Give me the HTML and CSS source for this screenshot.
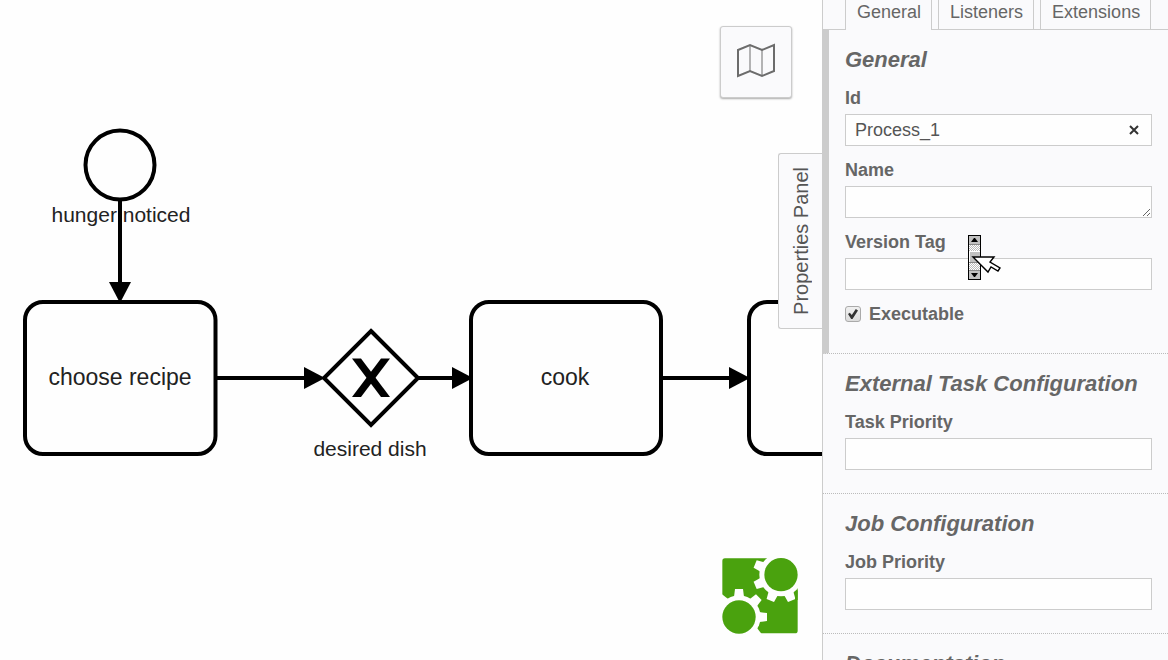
FILE: index.html
```html
<!DOCTYPE html>
<html lang="en">
<head>
<meta charset="utf-8">
<title>Process Modeler</title>
<link rel="stylesheet" href="styles.css">
</head>
<body>
<div class="modeler">
  <main class="canvas">
    <svg class="diagram" width="960" height="600" viewBox="0 0 960 600" role="img" aria-label="Process diagram">
      <g class="shape">
        <circle cx="120" cy="165" r="34.5"/>
        <rect x="25" y="302" width="190.5" height="152" rx="18"/>
        <path d="M371 331 418 378 371 425 324 378Z"/>
        <rect x="471" y="302" width="190" height="152" rx="18"/>
        <rect x="749" y="302" width="190" height="152" rx="18"/>
      </g>
      <g class="flow">
        <path d="M120 199V290"/>
        <path d="M216 378H310"/>
        <path d="M418 378H458"/>
        <path d="M661 378H735"/>
      </g>
      <g class="solid">
        <path d="M109 282H131L120 303Z"/>
        <path d="M304 367V389L325 378Z"/>
        <path d="M452 367V389L473 378Z"/>
        <path d="M729 367V389L750 378Z"/>
        <path d="M352 358.500H361L390 397H381Z"/>
        <path d="M381 358.500H390L361 397H352Z"/>
      </g>
      <g class="caption">
        <text x="121" y="222">hunger noticed</text>
        <text x="370" y="456">desired dish</text>
      </g>
      <g class="task-name">
        <text x="120" y="385">choose recipe</text>
        <text x="565" y="385">cook</text>
      </g>
    </svg>
    <button class="map-button" type="button" aria-label="Toggle minimap">
      <svg width="40" height="36" viewBox="0 0 40 36">
        <path class="map-outline" d="M2 7 14 2 26 7 38 2V28L26 33 14 28 2 33Z"/>
        <path class="map-fold" d="M14 2V28M26 7V33"/>
      </svg>
    </button>
    <a class="logo" href="#" aria-label="Powered by bpmn.io">
      <svg width="76" height="76" viewBox="66 54 228 228">
        <defs>
          <path id="tooth" d="M-15 -60 -12 -84H12L15 -60Z"/>
          <g id="gear">
            <circle r="65"/>
            <use href="#tooth"/>
            <use href="#tooth" transform="rotate(45)"/>
            <use href="#tooth" transform="rotate(90)"/>
            <use href="#tooth" transform="rotate(135)"/>
            <use href="#tooth" transform="rotate(180)"/>
            <use href="#tooth" transform="rotate(225)"/>
            <use href="#tooth" transform="rotate(270)"/>
            <use href="#tooth" transform="rotate(315)"/>
          </g>
        </defs>
        <path class="logo-green" d="M75 55H243V104H293V272Q293 280 285 280H117V231H67V63Q67 55 75 55Z"/>
        <use class="logo-gap" href="#gear" transform="translate(243 104) rotate(22.5)"/>
        <use class="logo-gap" href="#gear" transform="translate(117 231)"/>
        <path class="logo-green" d="M285 158 293 150V180H285Z"/>
        <circle class="logo-green" cx="243" cy="104" r="50"/>
        <circle class="logo-green" cx="117" cy="231" r="50"/>
      </svg>
    </a>
    <button class="panel-toggle" type="button"><span>Properties Panel</span></button>
  </main>

  <aside class="panel">
    <nav class="tabs">
      <a class="tab tab-active" href="#general">General</a>
      <a class="tab" href="#listeners">Listeners</a>
      <a class="tab" href="#extensions">Extensions</a>
    </nav>
    <form class="groups">
      <section class="group group-current" id="general">
        <h2>General</h2>
        <div class="field">
          <label for="id">Id</label>
          <div class="clearable">
            <input id="id" type="text" value="Process_1">
            <button class="clear" type="button" aria-label="Clear id">
              <svg width="10" height="10" viewBox="0 0 10 10"><path d="M1 1 9 9M9 1 1 9"/></svg>
            </button>
          </div>
        </div>
        <div class="field">
          <label for="name">Name</label>
          <textarea id="name" rows="1"></textarea>
        </div>
        <div class="field">
          <label for="version">Version Tag</label>
          <input id="version" type="text">
        </div>
        <div class="check">
          <input id="executable" type="checkbox" checked>
          <label for="executable">Executable</label>
        </div>
      </section>
      <section class="group">
        <h2>External Task Configuration</h2>
        <div class="field">
          <label for="task-priority">Task Priority</label>
          <input id="task-priority" type="text">
        </div>
      </section>
      <section class="group">
        <h2>Job Configuration</h2>
        <div class="field">
          <label for="job-priority">Job Priority</label>
          <input id="job-priority" type="text">
        </div>
      </section>
      <section class="group">
        <h2>Documentation</h2>
      </section>
    </form>
    <svg class="pointer" width="34" height="46" viewBox="0 0 34 46" aria-hidden="true">
      <defs>
        <pattern id="dither" width="2" height="2" patternUnits="userSpaceOnUse">
          <path fill="#fff" d="M0 0h2v2H0z"/>
          <path fill="#bbb" d="M0 0h1v1H0zM1 1h1v1H1z"/>
        </pattern>
      </defs>
      <rect x="0" y="0" width="13" height="45" fill="#000"/>
      <rect x="1" y="1" width="11" height="43" fill="url(#dither)"/>
      <path fill="#c0c0c0" d="M1 1h11v9H1zM1 35h11v9H1zM1 16h11v12H1z"/>
      <path fill="#fff" d="M1 16h11v1H1zM1 16h1v11H1z"/>
      <path fill="#888" d="M1 9h11v1H1zM1 27h11v1H1zM1 35h11v1H1z"/>
      <path fill="#000" d="M3 7H10L7 3H6ZM3 38H10L7 42H6Z"/>
      <path fill="#fff" stroke="#000" stroke-width="1.4" d="M5 22H26L22 27 32 33 30 36 23 32 20 37Z"/>
    </svg>
  </aside>
</div>
</body>
</html>
```
FILE: styles.css
```css
* {
  box-sizing: border-box;
}

body {
  margin: 0;
  font-family: "Liberation Sans", Arial, sans-serif;
  font-size: 18px;
  line-height: 20px;
  color: #666;
  background: #fefefe;
}

.modeler {
  display: flex;
  height: 100vh;
  overflow: hidden;
}

.canvas {
  position: relative;
  flex: 1;
  min-width: 0;
  overflow: hidden;
  background: #fefefe;
}

.diagram {
  display: block;
}

.shape {
  fill: #fefefe;
  stroke: #000;
  stroke-width: 4;
}

.flow {
  fill: none;
  stroke: #000;
  stroke-width: 4;
}

.solid {
  fill: #000;
}

.caption,
.task-name {
  fill: #222;
  font-size: 21px;
  text-anchor: middle;
}

.task-name {
  font-size: 23px;
}

.map-button {
  position: absolute;
  top: 26px;
  right: 30px;
  display: flex;
  align-items: center;
  justify-content: center;
  width: 72px;
  height: 72px;
  padding: 0 0 2px;
  border: 1px solid #ccc;
  border-radius: 3px;
  background: #fafafc;
  box-shadow: 0 1px 2px #aaa;
}

.map-outline,
.map-fold {
  fill: none;
  stroke: #6c6c6c;
  stroke-width: 2;
}

.map-fold {
  stroke-width: 1;
}

.logo {
  position: absolute;
  right: 24px;
  bottom: 26px;
  display: flex;
}

.logo-green {
  fill: #4aa20e;
}

.logo-gap {
  fill: #fefefe;
}

.panel-toggle {
  position: absolute;
  top: 153px;
  right: 0;
  display: flex;
  align-items: center;
  justify-content: center;
  width: 44px;
  height: 176px;
  padding: 0;
  border: 1px solid #ccc;
  border-right: 0;
  border-radius: 3px 0 0 3px;
  background: #fafafc;
  color: #555;
  font: 20px/24px "Liberation Sans", Arial, sans-serif;
}

.panel-toggle span {
  writing-mode: vertical-rl;
  transform: rotate(180deg);
}

.panel {
  position: relative;
  flex: none;
  width: 346px;
  border-left: 1px solid #ccc;
  background: #fafafc;
}

.tabs {
  display: flex;
  gap: 6px;
  padding-left: 22px;
  border-bottom: 1px solid #ccc;
}

.tab {
  padding: 2px 10px 7px 11px;
  border: 1px solid #ccc;
  border-width: 0 1px;
  color: #666;
  text-decoration: none;
}

.tab-active {
  margin-bottom: -1px;
  padding-bottom: 8px;
  background: #fafafc;
}

.group {
  padding: 17px 16px 23px 22px;
  border-bottom: 1px dotted #bbb;
}

.group-current {
  padding-left: 16px;
  padding-bottom: 29px;
  border-left: 6px solid #ccc;
}

h2 {
  margin: 0 0 15px;
  font-size: 22px;
  line-height: 26px;
  font-style: italic;
}

.field {
  display: flex;
  flex-direction: column;
  gap: 6px;
}

.field + .field {
  margin-top: 14px;
}

label {
  font-weight: bold;
}

input[type="text"],
textarea {
  display: block;
  width: 100%;
  height: 32px;
  margin: 0;
  padding: 5px 9px;
  border: 1px solid #ccc;
  border-radius: 0;
  background: #fefefe;
  color: #555;
  font: inherit;
}

textarea {
  resize: vertical;
  overflow: hidden;
}

.clearable {
  position: relative;
}

.clear {
  position: absolute;
  top: 6px;
  right: 8px;
  display: flex;
  align-items: center;
  justify-content: center;
  width: 20px;
  height: 20px;
  padding: 0;
  border: 0;
  background: none;
}

.clear path {
  stroke: #333;
  stroke-width: 2;
}

.check {
  display: flex;
  align-items: center;
  gap: 8px;
  margin-top: 14px;
}

.check input {
  appearance: none;
  display: flex;
  width: 16px;
  height: 16px;
  margin: 0;
  padding: 2px;
  border: 1px solid #aaa;
  border-radius: 3px;
  background: linear-gradient(#f0f0f0, #dcdcdc);
}

.check input:checked::before {
  content: "";
  flex: 1;
  background: #333;
  clip-path: polygon(0 50%, 18% 38%, 38% 60%, 78% 0, 100% 14%, 45% 100%, 32% 100%);
}

.pointer {
  position: absolute;
  top: 235px;
  left: 145px;
}
```
